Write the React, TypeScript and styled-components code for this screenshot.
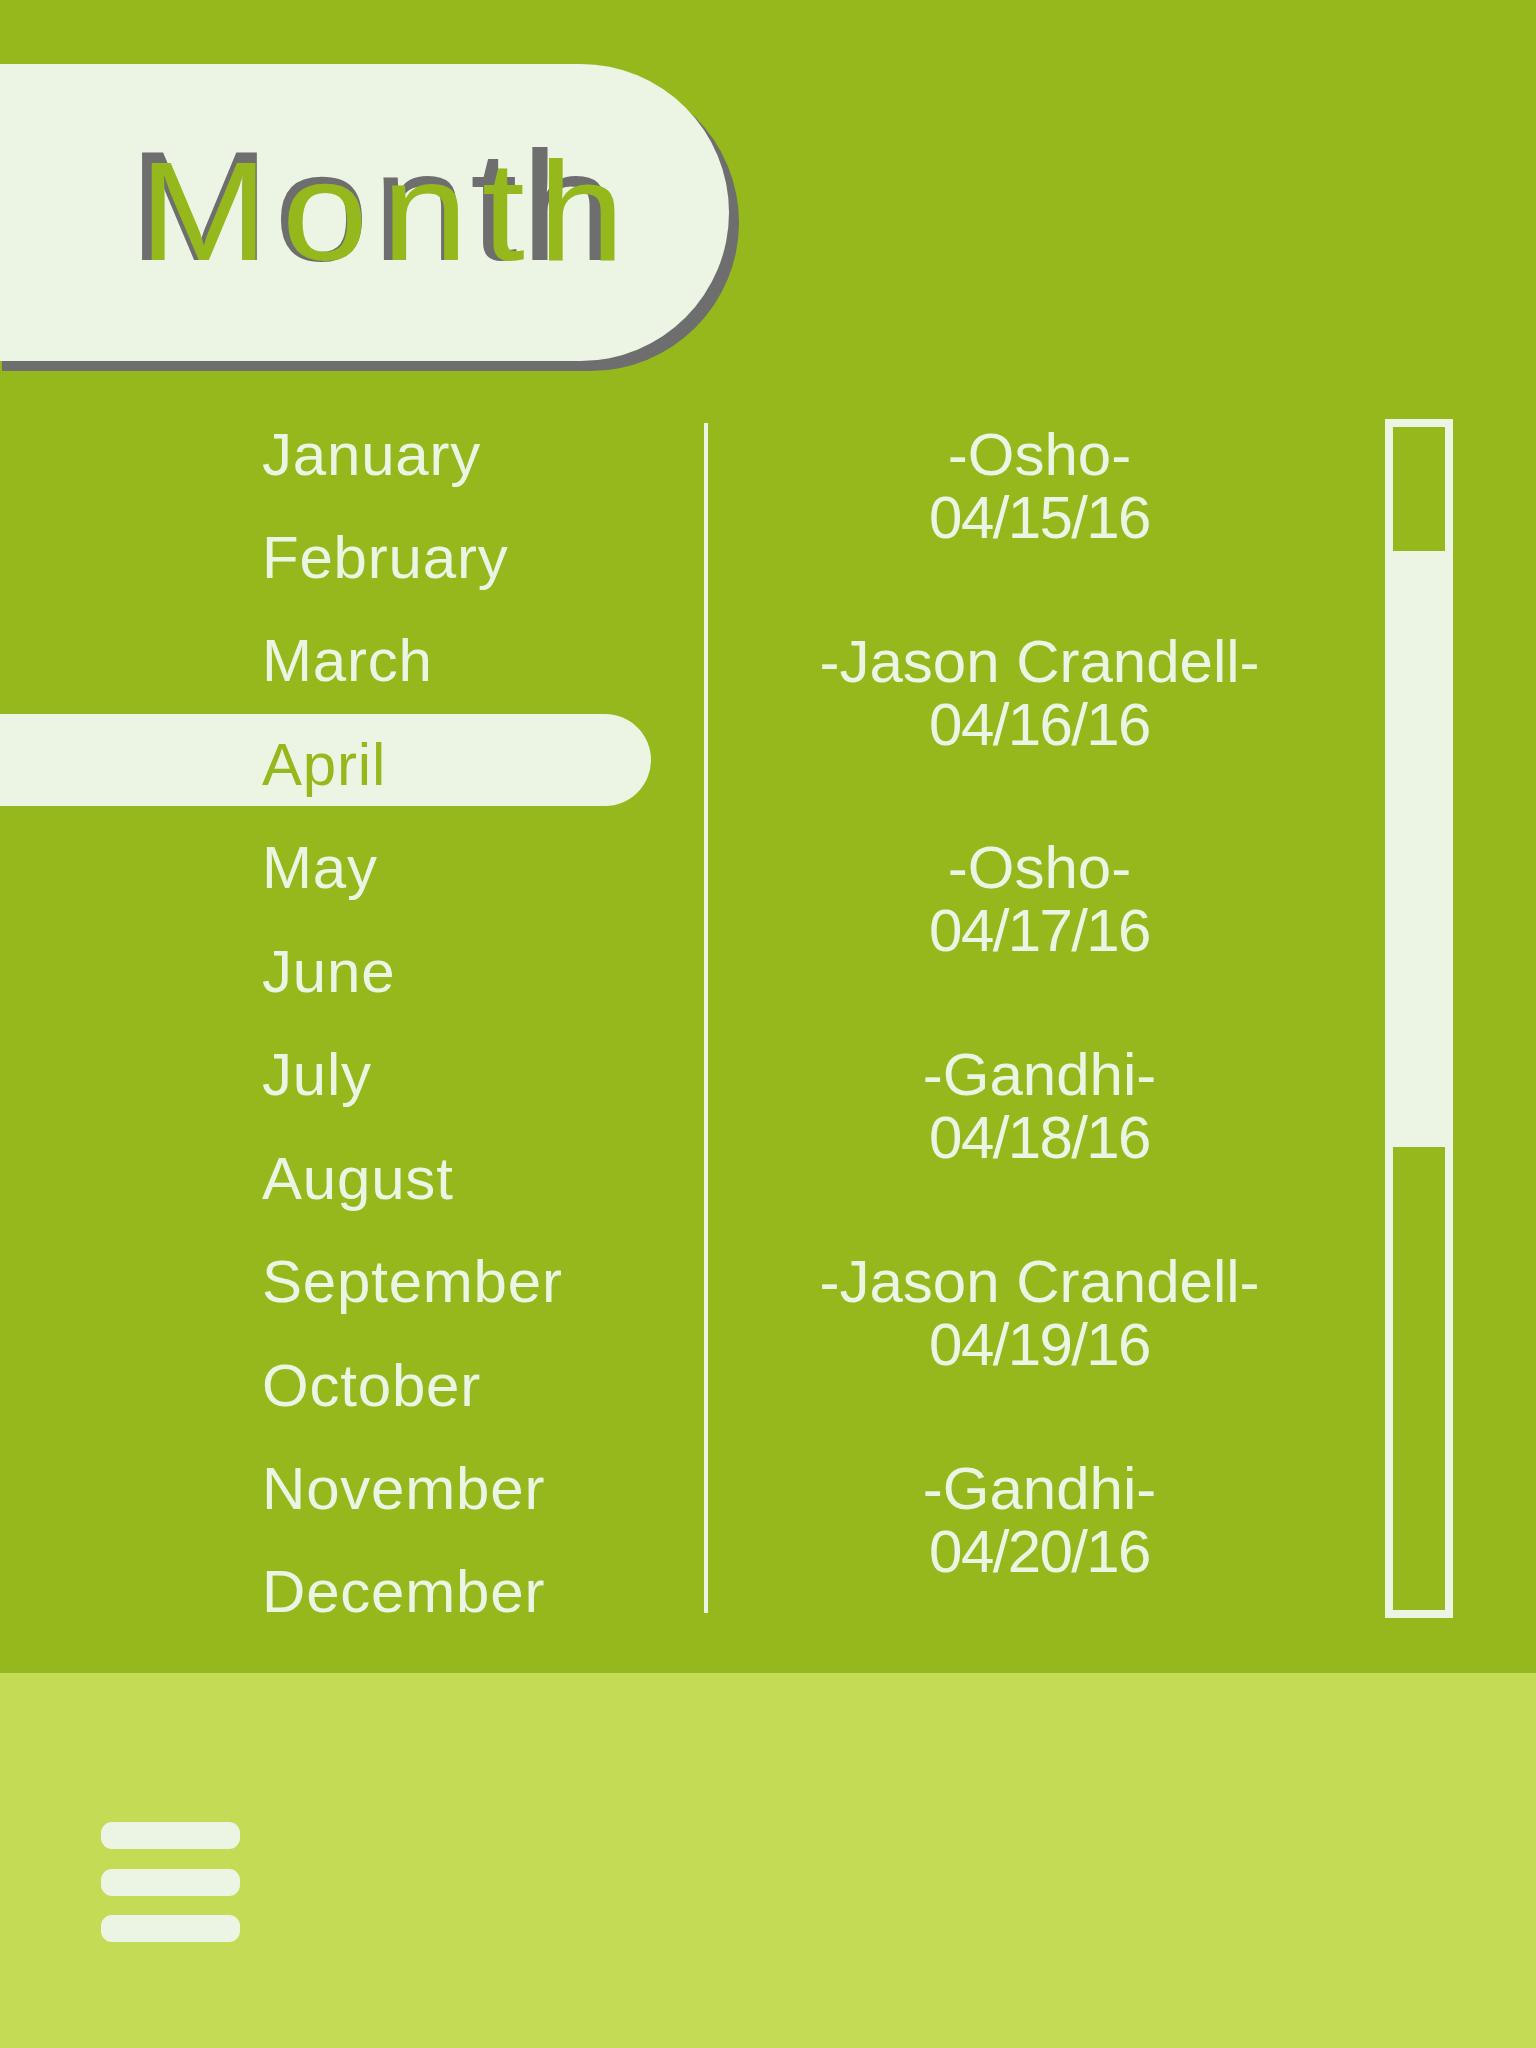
import React from "react";
import styled, { createGlobalStyle } from "styled-components";

const GlobalStyle = createGlobalStyle`
  html, body {
    margin: 0;
    padding: 0;
    background: #95b91c;
  }
  body {
    font-family: "Liberation Sans", Arial, sans-serif;
  }
`;

const Page = styled.div`
  width: 1536px;
  height: 2048px;
  display: flex;
  flex-direction: column;
  overflow: hidden;
`;

const Main = styled.section`
  height: 1673px;
  background: #95b91c;
  display: flex;
  flex-direction: column;
`;

const HeaderPill = styled.header`
  margin-top: 64px;
  margin-left: -8px;
  width: 737px;
  height: 297px;
  box-sizing: border-box;
  padding: 64px 0 0 136px;
  background: #ecf5e4;
  border-radius: 0 149px 149px 0;
  box-shadow: 10px 10px 0 #6e6e6e;
`;

const TitleWrap = styled.h1`
  position: relative;
  margin: 0;
  font-family: "Liberation Sans", Arial, sans-serif;
  font-weight: 400;
`;

const TitleBack = styled.span`
  display: block;
  font-size: 156px;
  line-height: 156px;
  letter-spacing: 2.5px;
  color: #6e6e6e;
  white-space: nowrap;
  transform: scaleX(1.1);
  transform-origin: 0 0;
`;

const TitleFront = styled.span`
  position: absolute;
  top: 12.6px;
  left: 10.5px;
  font-size: 141px;
  line-height: 141px;
  letter-spacing: 12.4px;
  color: #95b91c;
  white-space: nowrap;
  transform: scaleX(1.1);
  transform-origin: 0 0;
`;

const Content = styled.div`
  margin-top: 42.6px;
  display: grid;
  grid-template-columns: 704px 4px 663px 14px 68px;
  align-items: start;
`;

const MonthList = styled.ul`
  list-style: none;
  margin: 0;
  padding: 0;
  display: flex;
  flex-direction: column;
  gap: 11.45px;
`;

const MonthRow = styled.li<{ $active?: boolean }>`
  width: 651px;
  height: 92px;
  box-sizing: border-box;
  padding: 9px 0 0 262px;
  line-height: 83px;
  font-size: 60px;
  letter-spacing: 0.8px;
  color: ${(p) => (p.$active ? "#95b91c" : "#ecf5e4")};
  background: ${(p) => (p.$active ? "#ecf5e4" : "transparent")};
  border-radius: 0 46px 46px 0;
  white-space: nowrap;
`;

const Divider = styled.div`
  margin-top: 19.4px;
  width: 4px;
  height: 1190px;
  background: #ecf5e4;
`;

const QuoteList = styled.div`
  margin-top: 19.1px;
  display: flex;
  flex-direction: column;
  gap: 80.9px;
`;

const Quote = styled.div`
  display: flex;
  flex-direction: column;
  align-items: center;
  font-size: 60px;
  line-height: 63px;
  color: #ecf5e4;
  white-space: nowrap;
`;

const QuoteDate = styled.span`
  letter-spacing: -1.6px;
`;

const Track = styled.div`
  grid-column: 5;
  margin-top: 15.4px;
  position: relative;
  width: 68px;
  height: 1199px;
  box-sizing: border-box;
  border: 8px solid #ecf5e4;
`;

const Thumb = styled.div<{ $top: number; $height: number }>`
  position: absolute;
  left: 0;
  right: 0;
  top: ${(p) => p.$top}px;
  height: ${(p) => p.$height}px;
  background: #ecf5e4;
`;

const Footer = styled.footer`
  flex: 1;
  background: #c3db55;
  padding: 149px 0 0 101px;
  display: flex;
  flex-direction: column;
  gap: 19.5px;
`;

const MenuBar = styled.span`
  display: block;
  width: 139px;
  height: 27px;
  border-radius: 11px;
  background: #ecf5e4;
`;

const months = [
  "January",
  "February",
  "March",
  "April",
  "May",
  "June",
  "July",
  "August",
  "September",
  "October",
  "November",
  "December",
];

const quotes = [
  { author: "-Osho-", date: "04/15/16" },
  { author: "-Jason Crandell-", date: "04/16/16" },
  { author: "-Osho-", date: "04/17/16" },
  { author: "-Gandhi-", date: "04/18/16" },
  { author: "-Jason Crandell-", date: "04/19/16" },
  { author: "-Gandhi-", date: "04/20/16" },
];

export default function App() {
  return (
    <>
      <GlobalStyle />
      <Page>
        <Main>
          <HeaderPill>
            <TitleWrap>
              <TitleBack>Month</TitleBack>
              <TitleFront aria-hidden="true">Month</TitleFront>
            </TitleWrap>
          </HeaderPill>
          <Content>
            <MonthList>
              {months.map((m) => (
                <MonthRow key={m} $active={m === "April"}>
                  {m}
                </MonthRow>
              ))}
            </MonthList>
            <Divider />
            <QuoteList>
              {quotes.map((q, i) => (
                <Quote key={i}>
                  <span>{q.author}</span>
                  <QuoteDate>{q.date}</QuoteDate>
                </Quote>
              ))}
            </QuoteList>
            <Track>
              <Thumb $top={124} $height={596} />
            </Track>
          </Content>
        </Main>
        <Footer>
          <MenuBar />
          <MenuBar />
          <MenuBar />
        </Footer>
      </Page>
    </>
  );
}
